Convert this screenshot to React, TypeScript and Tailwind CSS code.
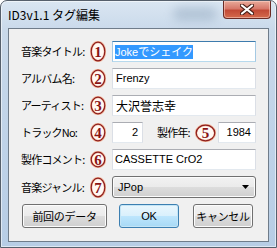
import React from "react";

const jp = "font-['Noto_Sans_CJK_JP',sans-serif]";
const latin = "font-['Liberation_Sans','Noto_Sans_CJK_JP',sans-serif]";

function Mark({ n, w = 16, h = 19 }: { n: string; w?: number; h?: number }) {
  return (
    <svg width={w} height={h} viewBox={`0 0 ${w} ${h}`} className="shrink-0">
      <ellipse cx={w / 2} cy={h / 2} rx={w / 2 - 1} ry={h / 2 - 1} fill="#fff8f4" stroke="#f2b79c" strokeWidth={2.4} />
      <ellipse cx={w / 2} cy={h / 2} rx={w / 2 - 1.2} ry={h / 2 - 1.2} fill="none" stroke="#8c1e1e" strokeWidth={1.2} />
      <text
        x={w / 2}
        y={h / 2 + 5}
        textAnchor="middle"
        fontFamily="'Liberation Serif', serif"
        fontWeight="bold"
        fontSize={15}
        fill="#8a1414"
      >
        {n}
      </text>
    </svg>
  );
}

function TextBox({
  className,
  focused,
  children,
}: {
  className?: string;
  focused?: boolean;
  children?: React.ReactNode;
}) {
  return (
    <div
      className={
        "flex h-[21px] items-center bg-white border " +
        (focused
          ? "border-[#a4c9e3] border-t-[#3d7bad] border-b-[#b7d9ed] "
          : "border-[#dbdfe6] border-t-[#abadb3] border-b-[#e3e9ef] ") +
        (className ?? "")
      }
    >
      {children}
    </div>
  );
}

function Label({ children, className }: { children: React.ReactNode; className?: string }) {
  return (
    <span className={`${jp} whitespace-nowrap text-[11px] leading-none tracking-[-0.8px] text-black ${className ?? ""}`}>
      {children}
    </span>
  );
}

function Button({
  children,
  className,
  primary,
}: {
  children: React.ReactNode;
  className?: string;
  primary?: boolean;
}) {
  return (
    <div
      className={
        "flex h-[24px] items-center justify-center whitespace-nowrap rounded-[3px] border text-[11px] tracking-[-0.3px] text-black " +
        jp +
        " " +
        (primary
          ? "border-[#3c7fb1] bg-[linear-gradient(#eaf6fd_0%,#d9f0fc_50%,#bee6fd_50%,#a7d9f5_100%)] shadow-[inset_0_0_0_1px_#c4e5f6] "
          : "border-[#707070] bg-[linear-gradient(#f2f2f2_0%,#ebebeb_50%,#dddddd_50%,#cfcfcf_100%)] shadow-[inset_0_0_0_1px_#fcfcfc] ") +
        (className ?? "")
      }
    >
      {children}
    </div>
  );
}

export default function App() {
  return (
    <div className="relative flex h-[248px] w-[277px] flex-col overflow-hidden rounded-t-[7px] border border-[#56606c] bg-[linear-gradient(#dae6f2_0%,#c9d9ea_12%,#bed2e8_60%,#b7cde5_100%)] shadow-[inset_0_0_0_1px_rgba(255,255,255,0.55)]">
      <div className="pointer-events-none absolute left-[172px] top-[6px] h-[14px] w-[44px] rounded-full bg-[#9fb3c8] opacity-60 blur-[5px]" />
      <div className="relative flex h-[27px] items-start">
        <span className={`${jp} pl-[7px] pt-[6px] text-[12px] leading-[16px] text-black`}>ID3v1.1 タグ編集</span>
        <div className="ml-auto mr-[5px] flex h-[18px] w-[48px] items-center justify-center rounded-b-[4px] border border-t-0 border-[#6a2b25] bg-[linear-gradient(#e9aa9a_0%,#d7786a_45%,#c24a36_55%,#d46a4c_100%)] shadow-[inset_0_0_0_1px_rgba(255,220,210,0.5)]">
          <svg width="14" height="11" viewBox="0 0 14 11">
            <path d="M2 1.5 L12 9.5 M12 1.5 L2 9.5" stroke="#4a2018" strokeWidth="4.2" strokeLinecap="round" />
            <path d="M2 1.5 L12 9.5 M12 1.5 L2 9.5" stroke="#ffffff" strokeWidth="2.2" strokeLinecap="round" />
          </svg>
        </div>
      </div>

      <div className="mx-[7px] flex h-[214px] flex-col border border-[#6f7c8a] bg-[#f0f0f0] pl-[12px] pt-[12px]">
        <div className="flex flex-col gap-[6px]">
          <div className="flex h-[21px] items-center">
            <Label className="w-[69px]">音楽タイトル:</Label>
            <Mark n="1" h={21} />
            <TextBox focused className="ml-[6px] w-[144px] pl-[2px]">
              <span className={`${latin} bg-[#3399ff] text-[11px] leading-[13px] text-white`}>
                Joke<span className={jp}>でシェイク</span>
              </span>
            </TextBox>
          </div>
          <div className="flex h-[21px] items-center">
            <Label className="w-[69px]">アルバム名:</Label>
            <Mark n="2" />
            <TextBox className="ml-[6px] w-[144px] pl-[3px]">
              <span className={`${latin} text-[11px] text-black`}>Frenzy</span>
            </TextBox>
          </div>
          <div className="flex h-[21px] items-center">
            <Label className="w-[69px]">アーティスト:</Label>
            <Mark n="3" />
            <TextBox className="ml-[6px] w-[144px] pl-[3px]">
              <span className={`${jp} text-[12px] text-black`}>大沢誉志幸</span>
            </TextBox>
          </div>
          <div className="flex h-[21px] items-center">
            <Label className="w-[69px]">トラックNo:</Label>
            <Mark n="4" />
            <TextBox className="ml-[6px] w-[31px] justify-end pr-[4px]">
              <span className={`${latin} text-[11px] text-black`}>2</span>
            </TextBox>
            <Label className="ml-[14px] w-[38px]">製作年:</Label>
            <Mark n="5" w={21} h={18} />
            <TextBox className="ml-[2px] w-[38px] justify-end pr-[4px]">
              <span className={`${latin} text-[11px] text-black`}>1984</span>
            </TextBox>
          </div>
          <div className="flex h-[21px] items-center">
            <Label className="w-[69px]">製作コメント:</Label>
            <Mark n="6" h={17} />
            <TextBox className="ml-[6px] w-[144px] pl-[2px]">
              <span className={`${latin} text-[11px] text-black`}>CASSETTE CrO2</span>
            </TextBox>
          </div>
          <div className="flex h-[22px] items-center">
            <Label className="w-[69px]">音楽ジャンル:</Label>
            <Mark n="7" h={21} />
            <div className="ml-[6px] flex h-[22px] w-[144px] items-center rounded-[3px] border border-[#707070] bg-[linear-gradient(#f2f2f2_0%,#ebebeb_50%,#dddddd_50%,#cfcfcf_100%)] pl-[5px] pr-[6px] shadow-[inset_0_0_0_1px_#fcfcfc]">
              <span className={`${latin} text-[11px] text-black`}>JPop</span>
              <svg className="ml-auto" width="7" height="4" viewBox="0 0 7 4">
                <path d="M0 0 H7 L3.5 4 Z" fill="#000" />
              </svg>
            </div>
          </div>
        </div>
        <div className="mt-[6px] flex">
          <Button className="ml-[1px] w-[85px]">前回のデータ</Button>
          <Button primary className="ml-[12px] w-[60px]">
            <span className={latin}>OK</span>
          </Button>
          <Button className="ml-[14px] w-[60px]">キャンセル</Button>
        </div>
      </div>
    </div>
  );
}
